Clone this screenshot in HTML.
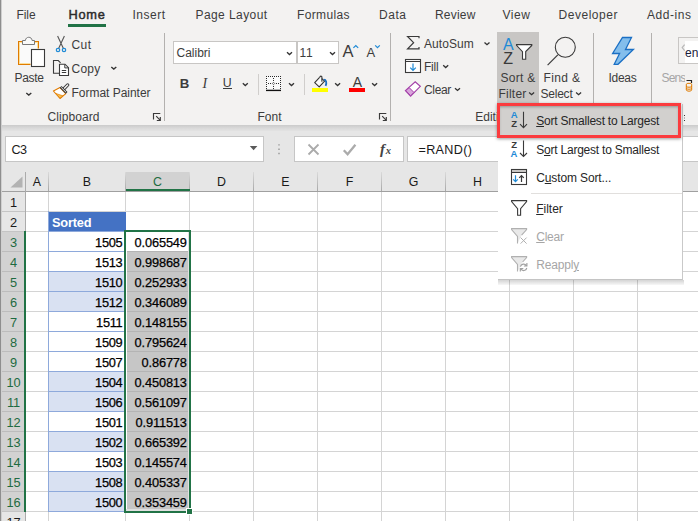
<!DOCTYPE html>
<html><head><meta charset="utf-8"><title>Excel</title>
<style>
html,body{margin:0;padding:0;}
body{width:698px;height:521px;overflow:hidden;position:relative;background:#fff;font-family:"Liberation Sans",sans-serif;font-size:12px;color:#3c3c3c;}
.t{position:absolute;white-space:nowrap;}
.a{position:absolute;}
svg{position:absolute;overflow:visible;}
u{text-decoration:underline;text-underline-offset:1px;}

</style></head>
<body>
<!-- ribbon background -->
<div class="a" style="left:0;top:0;width:698px;height:125px;background:#f3f2f1"></div>
<div class="a" style="left:0;top:125px;width:698px;height:7px;background:linear-gradient(#cbcbcb,#d9d9d9 45%,#e6e6e6)"></div>
<div class="a" style="left:0;top:131px;width:698px;height:41px;background:#e6e6e6"></div>
<!-- active tab underline -->
<div class="a" style="left:68px;top:24px;width:38px;height:2.5px;background:#217346"></div>
<!-- group separators -->
<div class="a" style="left:164px;top:33px;width:1px;height:88px;background:#b3b1af"></div>
<div class="a" style="left:390px;top:33px;width:1px;height:88px;background:#b3b1af"></div>
<div class="a" style="left:593px;top:33px;width:1px;height:71px;background:#b3b1af"></div>
<div class="a" style="left:651px;top:33px;width:1px;height:71px;background:#b3b1af"></div>
<div class="a" style="left:258px;top:74px;width:1px;height:21px;background:#d0cecc"></div>
<div class="a" style="left:304px;top:74px;width:1px;height:21px;background:#d0cecc"></div>
<!-- pressed Sort & Filter -->
<div class="a" style="left:497px;top:32px;width:42px;height:73px;background:#c8c6c4"></div>
<!-- font boxes -->
<div class="a" style="left:173px;top:41px;width:122px;height:21px;background:#fff;border:1px solid #c8c6c4"></div>
<div class="a" style="left:297px;top:41px;width:40px;height:21px;background:#fff;border:1px solid #c8c6c4"></div>
<!-- underline of U -->
<div class="a" style="left:223px;top:88px;width:9px;height:1.4px;background:#3c3c3c"></div>
<!-- colour bars -->
<div class="a" style="left:312px;top:88px;width:16px;height:4px;background:#ffff00"></div>
<div class="a" style="left:349px;top:88px;width:16px;height:4px;background:#ff0000"></div>
<svg width="698" height="521" style="left:0;top:0" fill="none" stroke-linecap="butt">
<!-- Paste -->
<rect x="18.5" y="41.5" width="20" height="23" fill="#fafafa" stroke="#e07b00"/>
<rect x="19.5" y="42.5" width="18" height="21" stroke="#fbdf9a"/>
<path d="M22.5 44.5V40.5H25.4C25.6 36.2 31.9 36.2 32.1 40.5H34.5V44.5Z" fill="#fafafa" stroke="#7a7a7a"/>
<rect x="30.5" y="48.5" width="15" height="19" fill="#f3f2f1"/>
<rect x="31.5" y="49.5" width="13" height="17" fill="#fff" stroke="#3a3a3a" stroke-width="1.1"/>
<!-- Cut -->
<path d="M57.6 36L63.3 48.2M64.4 36L58.7 48.2" stroke="#555" stroke-width="1.1"/>
<circle cx="58" cy="50" r="1.7" stroke="#1e8ad6" stroke-width="1.2"/>
<circle cx="64" cy="50" r="1.7" stroke="#1e8ad6" stroke-width="1.2"/>
<!-- Copy -->
<path d="M59 73.2H53.5V60.5H58.3L60.6 62.8" stroke="#3a3a3a" stroke-width="1.1"/>
<path d="M59.5 64.2H65L68.5 67.7V75.5H59.5Z" fill="#fff" stroke="#3a3a3a" stroke-width="1.1"/>
<path d="M64.8 64.4V67.9H68.3" stroke="#3a3a3a" stroke-width="1"/>
<path d="M61.8 70.5H66.2M61.8 72.5H66.2" stroke="#3a3a3a" stroke-width="1"/>
<!-- Format painter -->
<path d="M60 87.6L53.4 91L60 98.5L65.8 93.6Z" fill="#fff" stroke="#e07b00" stroke-width="1.1" stroke-linejoin="round"/>
<path d="M55.6 93.4L62.8 95.8L60 98.1Z" fill="#f8c050" stroke="#e07b00" stroke-width=".7"/>
<path d="M64.2 88.5L67.7 84.9" stroke="#3a3a3a" stroke-width="3.3" stroke-linecap="round"/>
<path d="M64.2 88.5L67.6 85" stroke="#f3f2f1" stroke-width="1.5" stroke-linecap="round"/>
<path d="M60.6 86.8L66.6 92.8" stroke="#3a3a3a" stroke-width="2.6"/>
<path d="M61.2 87.4L66 92.2" stroke="#f3f2f1" stroke-width=".9"/>
<!-- dialog launchers -->
<g stroke="#3a3a3a" stroke-width="1.15">
<path d="M160.3 113.5H153.5V119.6M156.2 116.2L160.3 120.3M160.3 117V120.5H156.8"/>
<path d="M386.3 113.5H379.5V119.6M382.2 116.2L386.3 120.3M386.3 117V120.5H382.8"/>
</g>
<!-- font box chevrons -->
<g stroke="#333" stroke-width="1.35">
<path d="M287.0 52.3L289.5 54.5L292.0 52.3"/>
<path d="M330.0 52.3L332.5 54.5L335.0 52.3"/>
<path d="M242.8 83.3L245.3 85.5L247.8 83.3"/>
<path d="M289.0 83.3L291.5 85.5L294.0 83.3"/>
<path d="M335.1 83.3L337.6 85.5L340.1 83.3"/>
<path d="M372.1 83.3L374.6 85.5L377.1 83.3"/>
<path d="M484.5 42.5L487.0 44.7L489.5 42.5"/>
<path d="M443.2 65.3L445.7 67.5L448.2 65.3"/>
<path d="M455.0 88.2L457.5 90.4L460.0 88.2"/>
<path d="M529.1 92.5L531.6 94.7L534.1 92.5"/>
<path d="M576.1 92.5L578.6 94.7L581.1 92.5"/>
<path d="M111.3 66.9L113.8 69.1L116.3 66.9"/>
<path d="M26.3 92.9L28.8 95.1L31.3 92.9"/>
</g>
<!-- blue carets -->
<path d="M353.4 47.9L355.8 45.5L358.2 47.9" stroke="#1e8ad6" stroke-width="1.2"/>
<path d="M375.2 45.4L377.5 47.7L379.8 45.4" stroke="#1e8ad6" stroke-width="1.2"/>
<!-- borders icon -->
<rect x="266" y="76" width="15" height="14" fill="#fafafa"/><path d="M266 76h1v1h-1zM266 78h1v1h-1zM266 80h1v1h-1zM266 82h1v1h-1zM266 84h1v1h-1zM266 86h1v1h-1zM266 88h1v1h-1zM268 76h1v1h-1zM268 83h1v1h-1zM270 76h1v1h-1zM270 83h1v1h-1zM272 76h1v1h-1zM273 78h1v1h-1zM273 80h1v1h-1zM273 86h1v1h-1zM273 88h1v1h-1zM274 76h1v1h-1zM276 76h1v1h-1zM276 83h1v1h-1zM278 76h1v1h-1zM278 83h1v1h-1zM280 76h1v1h-1zM280 78h1v1h-1zM280 80h1v1h-1zM280 82h1v1h-1zM280 84h1v1h-1zM280 86h1v1h-1zM280 88h1v1h-1z" fill="#2b2b2b"/><path d="M272.3 83.5L273.5 82.3L274.7 83.5L273.5 84.7Z" stroke="#2b2b2b" stroke-width=".7" fill="none"/><path d="M266 90.4H281" stroke="#111" stroke-width="1.4"/>
<!-- fill bucket -->
<path d="M319.6 77.3L314.7 82.7L319.2 86.8L324.6 81.2L321.9 78.6" fill="#fafafa" stroke="#333" stroke-width="1.1" stroke-linejoin="round"/>
<path d="M319.7 77.5C320 75.7 321.9 75.6 321.9 77.3V81.8" stroke="#333" stroke-width="1.1"/>
<path d="M323.7 79.7C326.2 79.6 327 82.6 325.6 85.8" stroke="#1e6fc0" stroke-width="1.8"/>
<!-- Sigma -->
<path d="M419 38.3V36.5H407.6L413.6 42.7L407.6 48.8H419V47" stroke="#3a3a3a" stroke-width="1.2"/>
<!-- Fill -->
<rect x="405.5" y="59.5" width="15" height="13" fill="#fff" stroke="#3a3a3a" stroke-width="1.1"/>
<path d="M405.5 61.5H420.5" stroke="#3a3a3a" stroke-width="1"/>
<path d="M413 63.5V70.2M410.2 67.6L413 70.4L415.8 67.6" stroke="#1e8ad6" stroke-width="1.2"/>
<!-- Clear -->
<path d="M405.4 90.6L415.2 81.9L420.3 86.4L410.6 96.2Z" fill="#fff" stroke="#a33fa8" stroke-width="1.2"/>
<path d="M405.8 90.6L409.2 87.6L413.9 92.4L410.6 95.7Z" fill="#d9a5dc" stroke="#a33fa8" stroke-width="1"/>
<!-- Sort & filter funnel -->
<path d="M516.5 44.6H531.8V45.4L525.7 51.6V59.3H522.5V51.6L516.5 45.4Z" fill="#fff" stroke="#3a3a3a" stroke-width="1.1"/>
<!-- Find & select -->
<circle cx="565.3" cy="47.3" r="10" stroke="#3a3a3a" stroke-width="1.1" fill="#f3f2f1"/>
<path d="M557.8 54.8L547.6 65.2" stroke="#3a3a3a" stroke-width="1.2"/>
<!-- Ideas -->
<path d="M622.5 37.5H631.5L625.5 49.5H633.4L618 64.3H614.2L619.6 53.5H612.6Z" fill="#83beec" stroke="#1a6fc4" stroke-width="1.3"/>
</svg>

<!-- formula bar -->
<div class="a" style="left:5px;top:136px;width:257px;height:24px;background:#fff;border:1px solid #c6c6c6"></div>
<div class="a" style="left:294px;top:136px;width:108px;height:24px;background:#fff;border:1px solid #c6c6c6"></div>
<div class="a" style="left:407px;top:136px;width:300px;height:24px;background:#fff;border:1px solid #c6c6c6"></div>
<svg width="698" height="521" style="left:0;top:0" fill="none">
<!-- formula bar icons -->
<path d="M249.8 146H257.4L253.6 150.2Z" fill="#5a5a5a"/>
<path d="M279 144.2V145.6M279 148.5V149.9M279 152.8V154.2" stroke="#a0a0a0" stroke-width="1.6"/>
<path d="M308.5 144.5L318.5 154.5M318.5 144.5L308.5 154.5" stroke="#ababab" stroke-width="1.8"/>
<path d="M343.8 150.2L347.6 154.2L355.4 144.8" stroke="#ababab" stroke-width="2.3"/>
</svg>
<div class="a" style="left:0px;top:172px;width:698px;height:19px;background:#e6e6e6;"></div>
<div class="a" style="left:0px;top:191px;width:25px;height:330px;background:#e6e6e6;"></div>
<div class="a" style="left:126px;top:172px;width:63px;height:19px;background:#d2d2d2;"></div>
<div class="a" style="left:2px;top:232px;width:23px;height:279px;background:#d2d2d2;"></div>
<div class="a" style="left:48px;top:192px;width:1px;height:329px;background:#d4d4d4;"></div>
<div class="a" style="left:125px;top:192px;width:1px;height:329px;background:#d4d4d4;"></div>
<div class="a" style="left:189px;top:192px;width:1px;height:329px;background:#d4d4d4;"></div>
<div class="a" style="left:253px;top:192px;width:1px;height:329px;background:#d4d4d4;"></div>
<div class="a" style="left:317px;top:192px;width:1px;height:329px;background:#d4d4d4;"></div>
<div class="a" style="left:381px;top:192px;width:1px;height:329px;background:#d4d4d4;"></div>
<div class="a" style="left:445px;top:192px;width:1px;height:329px;background:#d4d4d4;"></div>
<div class="a" style="left:509px;top:192px;width:1px;height:329px;background:#d4d4d4;"></div>
<div class="a" style="left:573px;top:192px;width:1px;height:329px;background:#d4d4d4;"></div>
<div class="a" style="left:637px;top:192px;width:1px;height:329px;background:#d4d4d4;"></div>
<div class="a" style="left:701px;top:192px;width:1px;height:329px;background:#d4d4d4;"></div>
<div class="a" style="left:26px;top:211px;width:672px;height:1px;background:#d4d4d4;"></div>
<div class="a" style="left:26px;top:231px;width:672px;height:1px;background:#d4d4d4;"></div>
<div class="a" style="left:26px;top:251px;width:672px;height:1px;background:#d4d4d4;"></div>
<div class="a" style="left:26px;top:271px;width:672px;height:1px;background:#d4d4d4;"></div>
<div class="a" style="left:26px;top:291px;width:672px;height:1px;background:#d4d4d4;"></div>
<div class="a" style="left:26px;top:311px;width:672px;height:1px;background:#d4d4d4;"></div>
<div class="a" style="left:26px;top:331px;width:672px;height:1px;background:#d4d4d4;"></div>
<div class="a" style="left:26px;top:351px;width:672px;height:1px;background:#d4d4d4;"></div>
<div class="a" style="left:26px;top:371px;width:672px;height:1px;background:#d4d4d4;"></div>
<div class="a" style="left:26px;top:391px;width:672px;height:1px;background:#d4d4d4;"></div>
<div class="a" style="left:26px;top:411px;width:672px;height:1px;background:#d4d4d4;"></div>
<div class="a" style="left:26px;top:431px;width:672px;height:1px;background:#d4d4d4;"></div>
<div class="a" style="left:26px;top:451px;width:672px;height:1px;background:#d4d4d4;"></div>
<div class="a" style="left:26px;top:471px;width:672px;height:1px;background:#d4d4d4;"></div>
<div class="a" style="left:26px;top:491px;width:672px;height:1px;background:#d4d4d4;"></div>
<div class="a" style="left:26px;top:511px;width:672px;height:1px;background:#d4d4d4;"></div>
<div class="a" style="left:26px;top:531px;width:672px;height:1px;background:#d4d4d4;"></div>
<div class="a" style="left:0px;top:191px;width:698px;height:1px;background:#a0a0a0;"></div>
<div class="a" style="left:25px;top:172px;width:1px;height:349px;background:#ababab;"></div>
<div class="a" style="left:48px;top:172px;width:1px;height:19px;background:linear-gradient(#dadada,#a8a8a8);"></div>
<div class="a" style="left:125px;top:172px;width:1px;height:19px;background:linear-gradient(#dadada,#a8a8a8);"></div>
<div class="a" style="left:189px;top:172px;width:1px;height:19px;background:linear-gradient(#dadada,#a8a8a8);"></div>
<div class="a" style="left:253px;top:172px;width:1px;height:19px;background:linear-gradient(#dadada,#a8a8a8);"></div>
<div class="a" style="left:317px;top:172px;width:1px;height:19px;background:linear-gradient(#dadada,#a8a8a8);"></div>
<div class="a" style="left:381px;top:172px;width:1px;height:19px;background:linear-gradient(#dadada,#a8a8a8);"></div>
<div class="a" style="left:445px;top:172px;width:1px;height:19px;background:linear-gradient(#dadada,#a8a8a8);"></div>
<div class="a" style="left:509px;top:172px;width:1px;height:19px;background:linear-gradient(#dadada,#a8a8a8);"></div>
<div class="a" style="left:573px;top:172px;width:1px;height:19px;background:linear-gradient(#dadada,#a8a8a8);"></div>
<div class="a" style="left:637px;top:172px;width:1px;height:19px;background:linear-gradient(#dadada,#a8a8a8);"></div>
<div class="a" style="left:701px;top:172px;width:1px;height:19px;background:linear-gradient(#dadada,#a8a8a8);"></div>
<div class="a" style="left:2px;top:211px;width:23px;height:1px;background:#c4c4c4;"></div>
<div class="a" style="left:2px;top:231px;width:23px;height:1px;background:#c4c4c4;"></div>
<div class="a" style="left:2px;top:251px;width:23px;height:1px;background:#c4c4c4;"></div>
<div class="a" style="left:2px;top:271px;width:23px;height:1px;background:#c4c4c4;"></div>
<div class="a" style="left:2px;top:291px;width:23px;height:1px;background:#c4c4c4;"></div>
<div class="a" style="left:2px;top:311px;width:23px;height:1px;background:#c4c4c4;"></div>
<div class="a" style="left:2px;top:331px;width:23px;height:1px;background:#c4c4c4;"></div>
<div class="a" style="left:2px;top:351px;width:23px;height:1px;background:#c4c4c4;"></div>
<div class="a" style="left:2px;top:371px;width:23px;height:1px;background:#c4c4c4;"></div>
<div class="a" style="left:2px;top:391px;width:23px;height:1px;background:#c4c4c4;"></div>
<div class="a" style="left:2px;top:411px;width:23px;height:1px;background:#c4c4c4;"></div>
<div class="a" style="left:2px;top:431px;width:23px;height:1px;background:#c4c4c4;"></div>
<div class="a" style="left:2px;top:451px;width:23px;height:1px;background:#c4c4c4;"></div>
<div class="a" style="left:2px;top:471px;width:23px;height:1px;background:#c4c4c4;"></div>
<div class="a" style="left:2px;top:491px;width:23px;height:1px;background:#c4c4c4;"></div>
<div class="a" style="left:2px;top:511px;width:23px;height:1px;background:#c4c4c4;"></div>
<div class="a" style="left:2px;top:531px;width:23px;height:1px;background:#c4c4c4;"></div>
<div class="a" style="left:2px;top:251px;width:23px;height:1px;background:#bcbcbc;"></div>
<div class="a" style="left:2px;top:271px;width:23px;height:1px;background:#bcbcbc;"></div>
<div class="a" style="left:2px;top:291px;width:23px;height:1px;background:#bcbcbc;"></div>
<div class="a" style="left:2px;top:311px;width:23px;height:1px;background:#bcbcbc;"></div>
<div class="a" style="left:2px;top:331px;width:23px;height:1px;background:#bcbcbc;"></div>
<div class="a" style="left:2px;top:351px;width:23px;height:1px;background:#bcbcbc;"></div>
<div class="a" style="left:2px;top:371px;width:23px;height:1px;background:#bcbcbc;"></div>
<div class="a" style="left:2px;top:391px;width:23px;height:1px;background:#bcbcbc;"></div>
<div class="a" style="left:2px;top:411px;width:23px;height:1px;background:#bcbcbc;"></div>
<div class="a" style="left:2px;top:431px;width:23px;height:1px;background:#bcbcbc;"></div>
<div class="a" style="left:2px;top:451px;width:23px;height:1px;background:#bcbcbc;"></div>
<div class="a" style="left:2px;top:471px;width:23px;height:1px;background:#bcbcbc;"></div>
<div class="a" style="left:2px;top:491px;width:23px;height:1px;background:#bcbcbc;"></div>
<svg style="left:10px;top:176px" width="13" height="12"><path d="M12.5 0.5V11.5H0.5Z" fill="#b2b2b2"/></svg>
<span class="t" style="top:176.00px;font-size:12.4px;line-height:12px;color:#1a1a1a;left:17.0px;width:40px;text-align:center;">A</span>
<span class="t" style="top:176.00px;font-size:12.4px;line-height:12px;color:#1a1a1a;left:67.0px;width:40px;text-align:center;">B</span>
<span class="t" style="top:176.00px;font-size:12.4px;line-height:12px;color:#1e6b41;left:137.5px;width:40px;text-align:center;">C</span>
<span class="t" style="top:176.00px;font-size:12.4px;line-height:12px;color:#1a1a1a;left:201.5px;width:40px;text-align:center;">D</span>
<span class="t" style="top:176.00px;font-size:12.4px;line-height:12px;color:#1a1a1a;left:265.5px;width:40px;text-align:center;">E</span>
<span class="t" style="top:176.00px;font-size:12.4px;line-height:12px;color:#1a1a1a;left:329.5px;width:40px;text-align:center;">F</span>
<span class="t" style="top:176.00px;font-size:12.4px;line-height:12px;color:#1a1a1a;left:393.5px;width:40px;text-align:center;">G</span>
<span class="t" style="top:176.00px;font-size:12.4px;line-height:12px;color:#1a1a1a;left:457.5px;width:40px;text-align:center;">H</span>
<span class="t" style="top:176.00px;font-size:12.4px;line-height:12px;color:#1a1a1a;left:521.5px;width:40px;text-align:center;">I</span>
<span class="t" style="top:176.00px;font-size:12.4px;line-height:12px;color:#1a1a1a;left:585.5px;width:40px;text-align:center;">J</span>
<span class="t" style="top:196.00px;font-size:12.8px;line-height:13px;color:#1a1a1a;left:1.5999999999999996px;width:24px;text-align:center;">1</span>
<span class="t" style="top:216.00px;font-size:12.8px;line-height:13px;color:#1a1a1a;left:1.5999999999999996px;width:24px;text-align:center;">2</span>
<span class="t" style="top:236.00px;font-size:12.8px;line-height:13px;color:#1e6b41;left:1.5999999999999996px;width:24px;text-align:center;">3</span>
<span class="t" style="top:256.00px;font-size:12.8px;line-height:13px;color:#1e6b41;left:1.5999999999999996px;width:24px;text-align:center;">4</span>
<span class="t" style="top:276.00px;font-size:12.8px;line-height:13px;color:#1e6b41;left:1.5999999999999996px;width:24px;text-align:center;">5</span>
<span class="t" style="top:296.00px;font-size:12.8px;line-height:13px;color:#1e6b41;left:1.5999999999999996px;width:24px;text-align:center;">6</span>
<span class="t" style="top:316.00px;font-size:12.8px;line-height:13px;color:#1e6b41;left:1.5999999999999996px;width:24px;text-align:center;">7</span>
<span class="t" style="top:336.00px;font-size:12.8px;line-height:13px;color:#1e6b41;left:1.5999999999999996px;width:24px;text-align:center;">8</span>
<span class="t" style="top:356.00px;font-size:12.8px;line-height:13px;color:#1e6b41;left:1.5999999999999996px;width:24px;text-align:center;">9</span>
<span class="t" style="top:376.00px;font-size:12.8px;line-height:13px;color:#1e6b41;left:1.5999999999999996px;width:24px;text-align:center;">10</span>
<span class="t" style="top:396.00px;font-size:12.8px;line-height:13px;color:#1e6b41;left:1.5999999999999996px;width:24px;text-align:center;">11</span>
<span class="t" style="top:416.00px;font-size:12.8px;line-height:13px;color:#1e6b41;left:1.5999999999999996px;width:24px;text-align:center;">12</span>
<span class="t" style="top:436.00px;font-size:12.8px;line-height:13px;color:#1e6b41;left:1.5999999999999996px;width:24px;text-align:center;">13</span>
<span class="t" style="top:456.00px;font-size:12.8px;line-height:13px;color:#1e6b41;left:1.5999999999999996px;width:24px;text-align:center;">14</span>
<span class="t" style="top:476.00px;font-size:12.8px;line-height:13px;color:#1e6b41;left:1.5999999999999996px;width:24px;text-align:center;">15</span>
<span class="t" style="top:496.00px;font-size:12.8px;line-height:13px;color:#1e6b41;left:1.5999999999999996px;width:24px;text-align:center;">16</span>
<span class="t" style="top:516.00px;font-size:12.8px;line-height:13px;color:#1a1a1a;left:1.5999999999999996px;width:24px;text-align:center;">17</span>
<div class="a" style="left:126px;top:189px;width:64px;height:2px;background:#217346;"></div>
<div class="a" style="left:24px;top:231px;width:2px;height:281px;background:#217346;"></div>
<div class="a" style="left:49px;top:212px;width:77px;height:19px;background:#4472c4;"></div>
<span class="t" style="top:216.00px;font-size:12.8px;line-height:13px;color:#fff;font-weight:700;letter-spacing:-0.2px;left:52px;">Sorted</span>
<div class="a" style="left:49px;top:272px;width:76px;height:19px;background:#d9e1f2;"></div>
<div class="a" style="left:49px;top:292px;width:76px;height:19px;background:#d9e1f2;"></div>
<div class="a" style="left:49px;top:372px;width:76px;height:19px;background:#d9e1f2;"></div>
<div class="a" style="left:49px;top:392px;width:76px;height:19px;background:#d9e1f2;"></div>
<div class="a" style="left:49px;top:432px;width:76px;height:19px;background:#d9e1f2;"></div>
<div class="a" style="left:49px;top:472px;width:76px;height:19px;background:#d9e1f2;"></div>
<div class="a" style="left:49px;top:492px;width:76px;height:19px;background:#d9e1f2;"></div>
<div class="a" style="left:48px;top:211px;width:1px;height:301px;background:#8ea9db;"></div>
<div class="a" style="left:48px;top:231px;width:77px;height:1px;background:#8ea9db;"></div>
<div class="a" style="left:48px;top:251px;width:77px;height:1px;background:#8ea9db;"></div>
<div class="a" style="left:48px;top:271px;width:77px;height:1px;background:#8ea9db;"></div>
<div class="a" style="left:48px;top:291px;width:77px;height:1px;background:#8ea9db;"></div>
<div class="a" style="left:48px;top:311px;width:77px;height:1px;background:#8ea9db;"></div>
<div class="a" style="left:48px;top:331px;width:77px;height:1px;background:#8ea9db;"></div>
<div class="a" style="left:48px;top:351px;width:77px;height:1px;background:#8ea9db;"></div>
<div class="a" style="left:48px;top:371px;width:77px;height:1px;background:#8ea9db;"></div>
<div class="a" style="left:48px;top:391px;width:77px;height:1px;background:#8ea9db;"></div>
<div class="a" style="left:48px;top:411px;width:77px;height:1px;background:#8ea9db;"></div>
<div class="a" style="left:48px;top:431px;width:77px;height:1px;background:#8ea9db;"></div>
<div class="a" style="left:48px;top:451px;width:77px;height:1px;background:#8ea9db;"></div>
<div class="a" style="left:48px;top:471px;width:77px;height:1px;background:#8ea9db;"></div>
<div class="a" style="left:48px;top:491px;width:77px;height:1px;background:#8ea9db;"></div>
<div class="a" style="left:48px;top:511px;width:77px;height:1px;background:#8ea9db;"></div>
<div class="a" style="left:127px;top:252px;width:61px;height:257px;background:#c6c6c6;"></div>
<div class="a" style="left:127px;top:251px;width:61px;height:1px;background:#b4b4b4;"></div>
<div class="a" style="left:127px;top:271px;width:61px;height:1px;background:#b4b4b4;"></div>
<div class="a" style="left:127px;top:291px;width:61px;height:1px;background:#b4b4b4;"></div>
<div class="a" style="left:127px;top:311px;width:61px;height:1px;background:#b4b4b4;"></div>
<div class="a" style="left:127px;top:331px;width:61px;height:1px;background:#b4b4b4;"></div>
<div class="a" style="left:127px;top:351px;width:61px;height:1px;background:#b4b4b4;"></div>
<div class="a" style="left:127px;top:371px;width:61px;height:1px;background:#b4b4b4;"></div>
<div class="a" style="left:127px;top:391px;width:61px;height:1px;background:#b4b4b4;"></div>
<div class="a" style="left:127px;top:411px;width:61px;height:1px;background:#b4b4b4;"></div>
<div class="a" style="left:127px;top:431px;width:61px;height:1px;background:#b4b4b4;"></div>
<div class="a" style="left:127px;top:451px;width:61px;height:1px;background:#b4b4b4;"></div>
<div class="a" style="left:127px;top:471px;width:61px;height:1px;background:#b4b4b4;"></div>
<div class="a" style="left:127px;top:491px;width:61px;height:1px;background:#b4b4b4;"></div>
<div class="a" style="left:126px;top:232px;width:63px;height:1px;background:#fff;"></div>
<div class="a" style="left:126px;top:232px;width:1px;height:278px;background:#fff;"></div>
<div class="a" style="left:188px;top:232px;width:1px;height:277px;background:#e0e0e0;"></div>
<div class="a" style="left:126px;top:509px;width:62px;height:2px;background:#e0e0e0;"></div>
<div class="a" style="left:127px;top:233px;width:61px;height:18px;background:#fff;"></div>
<span class="t" style="top:236.00px;font-size:12.8px;line-height:13px;color:#000;letter-spacing:-0.3px;-webkit-text-stroke:0.25px #000;left:62.400000000000006px;width:60px;text-align:right;">1505</span>
<span class="t" style="top:236.00px;font-size:12.8px;line-height:13px;color:#000;letter-spacing:-0.15px;-webkit-text-stroke:0.25px #000;left:126.80000000000001px;width:60px;text-align:right;">0.065549</span>
<span class="t" style="top:256.00px;font-size:12.8px;line-height:13px;color:#000;letter-spacing:-0.3px;-webkit-text-stroke:0.25px #000;left:62.400000000000006px;width:60px;text-align:right;">1513</span>
<span class="t" style="top:256.00px;font-size:12.8px;line-height:13px;color:#000;letter-spacing:-0.15px;-webkit-text-stroke:0.25px #000;left:126.80000000000001px;width:60px;text-align:right;">0.998687</span>
<span class="t" style="top:276.00px;font-size:12.8px;line-height:13px;color:#000;letter-spacing:-0.3px;-webkit-text-stroke:0.25px #000;left:62.400000000000006px;width:60px;text-align:right;">1510</span>
<span class="t" style="top:276.00px;font-size:12.8px;line-height:13px;color:#000;letter-spacing:-0.15px;-webkit-text-stroke:0.25px #000;left:126.80000000000001px;width:60px;text-align:right;">0.252933</span>
<span class="t" style="top:296.00px;font-size:12.8px;line-height:13px;color:#000;letter-spacing:-0.3px;-webkit-text-stroke:0.25px #000;left:62.400000000000006px;width:60px;text-align:right;">1512</span>
<span class="t" style="top:296.00px;font-size:12.8px;line-height:13px;color:#000;letter-spacing:-0.15px;-webkit-text-stroke:0.25px #000;left:126.80000000000001px;width:60px;text-align:right;">0.346089</span>
<span class="t" style="top:316.00px;font-size:12.8px;line-height:13px;color:#000;letter-spacing:-0.3px;-webkit-text-stroke:0.25px #000;left:62.400000000000006px;width:60px;text-align:right;">1511</span>
<span class="t" style="top:316.00px;font-size:12.8px;line-height:13px;color:#000;letter-spacing:-0.15px;-webkit-text-stroke:0.25px #000;left:126.80000000000001px;width:60px;text-align:right;">0.148155</span>
<span class="t" style="top:336.00px;font-size:12.8px;line-height:13px;color:#000;letter-spacing:-0.3px;-webkit-text-stroke:0.25px #000;left:62.400000000000006px;width:60px;text-align:right;">1509</span>
<span class="t" style="top:336.00px;font-size:12.8px;line-height:13px;color:#000;letter-spacing:-0.15px;-webkit-text-stroke:0.25px #000;left:126.80000000000001px;width:60px;text-align:right;">0.795624</span>
<span class="t" style="top:356.00px;font-size:12.8px;line-height:13px;color:#000;letter-spacing:-0.3px;-webkit-text-stroke:0.25px #000;left:62.400000000000006px;width:60px;text-align:right;">1507</span>
<span class="t" style="top:356.00px;font-size:12.8px;line-height:13px;color:#000;letter-spacing:-0.15px;-webkit-text-stroke:0.25px #000;left:126.80000000000001px;width:60px;text-align:right;">0.86778</span>
<span class="t" style="top:376.00px;font-size:12.8px;line-height:13px;color:#000;letter-spacing:-0.3px;-webkit-text-stroke:0.25px #000;left:62.400000000000006px;width:60px;text-align:right;">1504</span>
<span class="t" style="top:376.00px;font-size:12.8px;line-height:13px;color:#000;letter-spacing:-0.15px;-webkit-text-stroke:0.25px #000;left:126.80000000000001px;width:60px;text-align:right;">0.450813</span>
<span class="t" style="top:396.00px;font-size:12.8px;line-height:13px;color:#000;letter-spacing:-0.3px;-webkit-text-stroke:0.25px #000;left:62.400000000000006px;width:60px;text-align:right;">1506</span>
<span class="t" style="top:396.00px;font-size:12.8px;line-height:13px;color:#000;letter-spacing:-0.15px;-webkit-text-stroke:0.25px #000;left:126.80000000000001px;width:60px;text-align:right;">0.561097</span>
<span class="t" style="top:416.00px;font-size:12.8px;line-height:13px;color:#000;letter-spacing:-0.3px;-webkit-text-stroke:0.25px #000;left:62.400000000000006px;width:60px;text-align:right;">1501</span>
<span class="t" style="top:416.00px;font-size:12.8px;line-height:13px;color:#000;letter-spacing:-0.15px;-webkit-text-stroke:0.25px #000;left:126.80000000000001px;width:60px;text-align:right;">0.911513</span>
<span class="t" style="top:436.00px;font-size:12.8px;line-height:13px;color:#000;letter-spacing:-0.3px;-webkit-text-stroke:0.25px #000;left:62.400000000000006px;width:60px;text-align:right;">1502</span>
<span class="t" style="top:436.00px;font-size:12.8px;line-height:13px;color:#000;letter-spacing:-0.15px;-webkit-text-stroke:0.25px #000;left:126.80000000000001px;width:60px;text-align:right;">0.665392</span>
<span class="t" style="top:456.00px;font-size:12.8px;line-height:13px;color:#000;letter-spacing:-0.3px;-webkit-text-stroke:0.25px #000;left:62.400000000000006px;width:60px;text-align:right;">1503</span>
<span class="t" style="top:456.00px;font-size:12.8px;line-height:13px;color:#000;letter-spacing:-0.15px;-webkit-text-stroke:0.25px #000;left:126.80000000000001px;width:60px;text-align:right;">0.145574</span>
<span class="t" style="top:476.00px;font-size:12.8px;line-height:13px;color:#000;letter-spacing:-0.3px;-webkit-text-stroke:0.25px #000;left:62.400000000000006px;width:60px;text-align:right;">1508</span>
<span class="t" style="top:476.00px;font-size:12.8px;line-height:13px;color:#000;letter-spacing:-0.15px;-webkit-text-stroke:0.25px #000;left:126.80000000000001px;width:60px;text-align:right;">0.405337</span>
<span class="t" style="top:496.00px;font-size:12.8px;line-height:13px;color:#000;letter-spacing:-0.3px;-webkit-text-stroke:0.25px #000;left:62.400000000000006px;width:60px;text-align:right;">1500</span>
<span class="t" style="top:496.00px;font-size:12.8px;line-height:13px;color:#000;letter-spacing:-0.15px;-webkit-text-stroke:0.25px #000;left:126.80000000000001px;width:60px;text-align:right;">0.353459</span>
<div class="a" style="left:124px;top:230px;width:67px;height:2px;background:#217346;"></div>
<div class="a" style="left:124px;top:230px;width:2px;height:283px;background:#217346;"></div>
<div class="a" style="left:189px;top:230px;width:2px;height:278px;background:#217346;"></div>
<div class="a" style="left:124px;top:511px;width:62px;height:2px;background:#217346;"></div>
<div class="a" style="left:186px;top:508px;width:7px;height:7px;background:#fff;"></div>
<div class="a" style="left:187px;top:509px;width:5px;height:5px;background:#217346;"></div>
<span class="t" style="left:16.50px;top:9.00px;font-size:12px;line-height:12px;color:#3c3c3c;letter-spacing:-0.086px;">File</span>
<span class="t" style="left:68.50px;top:8.00px;font-size:12.8px;line-height:13px;color:#2b2b2b;letter-spacing:0.715px;-webkit-text-stroke:0.45px #2b2b2b;">Home</span>
<span class="t" style="left:132.50px;top:9.00px;font-size:12px;line-height:12px;color:#3c3c3c;letter-spacing:0.497px;">Insert</span>
<span class="t" style="left:195.50px;top:9.00px;font-size:12px;line-height:12px;color:#3c3c3c;letter-spacing:0.419px;">Page Layout</span>
<span class="t" style="left:297.00px;top:9.00px;font-size:12px;line-height:12px;color:#3c3c3c;letter-spacing:0.373px;">Formulas</span>
<span class="t" style="left:379.00px;top:9.00px;font-size:12px;line-height:12px;color:#3c3c3c;letter-spacing:0.535px;">Data</span>
<span class="t" style="left:435.00px;top:9.00px;font-size:12px;line-height:12px;color:#3c3c3c;letter-spacing:0.190px;">Review</span>
<span class="t" style="left:502.50px;top:9.00px;font-size:12px;line-height:12px;color:#3c3c3c;letter-spacing:0.551px;">View</span>
<span class="t" style="left:558.50px;top:9.00px;font-size:12px;line-height:12px;color:#3c3c3c;letter-spacing:0.533px;">Developer</span>
<span class="t" style="left:647.00px;top:9.00px;font-size:12px;line-height:12px;color:#3c3c3c;letter-spacing:0.545px;">Add-ins</span>
<span class="t" style="left:14.50px;top:72.00px;font-size:12px;line-height:12px;color:#3c3c3c;letter-spacing:-0.338px;">Paste</span>
<span class="t" style="left:71.50px;top:39.00px;font-size:12px;line-height:12px;color:#3c3c3c;letter-spacing:0.438px;">Cut</span>
<span class="t" style="left:71.50px;top:63.00px;font-size:12px;line-height:12px;color:#3c3c3c;letter-spacing:0.246px;">Copy</span>
<span class="t" style="left:71.50px;top:87.00px;font-size:12px;line-height:12px;color:#3c3c3c;letter-spacing:-0.026px;">Format Painter</span>
<span class="t" style="left:47.50px;top:111.00px;font-size:12px;line-height:12px;color:#3c3c3c;letter-spacing:0.069px;">Clipboard</span>
<span class="t" style="left:176.50px;top:47.00px;font-size:12px;line-height:12px;color:#3c3c3c;">Calibri</span>
<span class="t" style="left:299.50px;top:47.00px;font-size:12px;line-height:12px;color:#3c3c3c;letter-spacing:0.766px;">11</span>
<span class="t" style="left:179.80px;top:77.00px;font-size:13.2px;line-height:13px;color:#3c3c3c;font-weight:700;">B</span>
<span class="t" style="left:202.50px;top:76.50px;font-size:14px;line-height:14px;color:#3c3c3c;font-style:italic;font-family:'Liberation Serif', serif;">I</span>
<span class="t" style="left:222.80px;top:77.00px;font-size:12.3px;line-height:12px;color:#3c3c3c;">U</span>
<span class="t" style="left:257.50px;top:111.00px;font-size:12px;line-height:12px;color:#3c3c3c;">Font</span>
<span class="t" style="left:342.50px;top:43.00px;font-size:16.5px;line-height:16px;color:#3c3c3c;">A</span>
<span class="t" style="left:366.50px;top:46.00px;font-size:13px;line-height:13px;color:#3c3c3c;">A</span>
<span class="t" style="left:352.80px;top:75.00px;font-size:14px;line-height:14px;color:#3c3c3c;">A</span>
<span class="t" style="left:424.00px;top:38.00px;font-size:12px;line-height:12px;color:#3c3c3c;letter-spacing:0.049px;">AutoSum</span>
<span class="t" style="left:424.00px;top:61.00px;font-size:12px;line-height:12px;color:#3c3c3c;letter-spacing:-0.207px;">Fill</span>
<span class="t" style="left:424.00px;top:84.00px;font-size:12px;line-height:12px;color:#3c3c3c;letter-spacing:-0.338px;">Clear</span>
<span class="t" style="left:475.20px;top:111.00px;font-size:12px;line-height:12px;color:#3c3c3c;letter-spacing:0.014px;">Editing</span>
<span class="t" style="left:500.50px;top:72.00px;font-size:12px;line-height:12px;color:#3c3c3c;letter-spacing:0.273px;">Sort &amp;</span>
<span class="t" style="left:498.50px;top:88.00px;font-size:12px;line-height:12px;color:#3c3c3c;letter-spacing:0.221px;">Filter</span>
<span class="t" style="left:543.50px;top:72.00px;font-size:12px;line-height:12px;color:#3c3c3c;letter-spacing:0.385px;">Find &amp;</span>
<span class="t" style="left:540.50px;top:88.00px;font-size:12px;line-height:12px;color:#3c3c3c;letter-spacing:-0.227px;">Select</span>
<span class="t" style="left:608.50px;top:72.00px;font-size:12px;line-height:12px;color:#3c3c3c;letter-spacing:-0.272px;">Ideas</span>
<span class="t" style="left:661.50px;top:72.00px;font-size:12px;line-height:12px;color:#a6a6a6;letter-spacing:-0.840px;">Sens</span>
<span class="t" style="left:503.10px;top:36.50px;font-size:16px;line-height:16px;color:#1e8ad6;">A</span>
<span class="t" style="left:503.30px;top:50.50px;font-size:16px;line-height:16px;color:#3a3a3a;">Z</span>
<span class="t" style="left:11.50px;top:143.50px;font-size:12.6px;line-height:13px;color:#1a1a1a;letter-spacing:-0.555px;">C3</span>
<span class="t" style="left:418.50px;top:143.50px;font-size:12.6px;line-height:13px;color:#1a1a1a;letter-spacing:0.330px;">=RAND()</span>
<span class="t" style="left:380.00px;top:141.50px;font-size:15px;line-height:15px;color:#444;font-weight:700;font-style:italic;font-family:'Liberation Serif', serif;letter-spacing:0.625px;">f<span style="font-size:10.5px">x</span></span>
<!-- right overlay (partially visible gallery/tooltip) -->
<div class="a" style="left:685px;top:70px;width:13px;height:30px;background:#f3f2f1"></div>
<div class="a" style="left:678px;top:37px;width:30px;height:27px;background:#f3f2f1;border:1px solid #c8c6c4;box-sizing:border-box"></div>
<div class="a" style="left:685px;top:41px;width:20px;height:22px;background:#fff"></div>
<svg width="698" height="521" style="left:0;top:0" fill="none">
<path d="M684.6 44.6L682.2 47.6L684.6 50.6" stroke="#b8b8b8" stroke-width="1.2"/>
<path d="M686.5 80.5H691.5V83" stroke="#222" stroke-width="1.2"/>
<path d="M686.3 84.2C686.3 83 691.7 83 691.7 84.2V90C691.7 91.6 686.3 91.6 686.3 90ZM686.3 86.2C686.3 87.6 691.7 87.6 691.7 86.2M686.3 88.2C686.3 89.6 691.7 89.6 691.7 88.2" stroke="#e07b00" stroke-width="1"/>
</svg>
<span class="t" style="left:685px;top:46px;font-size:12px;line-height:14px;color:#1b1b3a">en</span>
<div class="a" style="left:684px;top:115px;width:1px;height:1px;background:#333"></div><div class="a" style="left:684px;top:120px;width:1px;height:1px;background:#333"></div><div class="a" style="left:684px;top:117px;width:1px;height:2px;background:#bbb"></div>
<!-- dropdown menu -->
<div class="a" style="left:498px;top:104px;width:185px;height:176px;background:#fff;border-right:1px solid #c9c9c9;border-bottom:1px solid #c4c4c4;box-sizing:border-box"></div>
<div class="a" style="left:498px;top:280px;width:186px;height:5px;background:linear-gradient(rgba(0,0,0,.17),rgba(0,0,0,.03))"></div>
<div class="a" style="left:531px;top:193px;width:151px;height:1px;background:#e1dfdd"></div>
<!-- highlighted item with red annotation box -->
<div class="a" style="left:497px;top:103px;width:178px;height:29px;background:#d2d0ce;border:3px solid #fb3b3e;box-shadow:0 1px 3px 0 rgba(0,0,0,.4),inset 0 2px 3px -1px rgba(0,0,0,.3)"></div>
<svg width="698" height="521" style="left:0;top:0" fill="none">
<!-- arrows -->
<g stroke="#3a3a3a" stroke-width="1.1">
<path d="M523.5 111.8V127.3M520 124.2L523.5 127.7L527 124.2"/>
<path d="M523.5 140.6V156.1M520 153L523.5 156.5L527 153"/>
</g>
<!-- custom sort -->
<rect x="511.5" y="169.5" width="15" height="15" fill="#fff" stroke="#3a3a3a" stroke-width="1.1"/>
<rect x="512" y="170" width="14" height="2.5" fill="#c8c6c4"/>
<path d="M511.5 172.5H526.5" stroke="#3a3a3a" stroke-width="1"/>
<path d="M515.5 175.3V181.5M513.2 179.4L515.5 181.7L517.8 179.4" stroke="#1e8ad6" stroke-width="1.2"/>
<path d="M521.5 182V175.8M519.2 177.9L521.5 175.6L523.8 177.9" stroke="#3a3a3a" stroke-width="1.2"/>
<!-- filter -->
<path d="M511.6 200.6H526.6V201.6L520.6 208.6V215.2H517.6V208.6L511.6 201.6Z" fill="#fff" stroke="#3a3a3a" stroke-width="1.1"/>
<!-- clear (disabled) -->
<path d="M517.5 243.6V236.4L511.6 229.6V228.6H526.6V229.6L521.6 235.2" fill="#e9e9e9" stroke="#b0b0b0" stroke-width="1.1"/>
<path d="M520.6 237.6L526.6 243.6M526.6 237.6L520.6 243.6" stroke="#b0b0b0" stroke-width="1"/>
<!-- reapply (disabled) -->
<path d="M517.5 271.6V264.4L511.6 257.6V256.6H526.6V257.6L522.6 262" fill="#e9e9e9" stroke="#b0b0b0" stroke-width="1.1"/>
<path d="M520.4 266.6A3.3 3.3 0 0 1 526.4 265.6M526.9 263V266H523.9M526.8 268A3.3 3.3 0 0 1 520.8 269M520.3 271.6V268.6H523.3" stroke="#a0a0a0" stroke-width="1.15"/>
</svg>
<span class="t" style="left:510.8px;top:110.4px;font-size:9.5px;line-height:9px;font-weight:700;color:#1e8ad6">A</span>
<span class="t" style="left:511.2px;top:119.4px;font-size:9.5px;line-height:9px;font-weight:700;color:#3a3a3a">Z</span>
<span class="t" style="left:511.2px;top:140px;font-size:9.5px;line-height:9px;font-weight:700;color:#3a3a3a">Z</span>
<span class="t" style="left:510.6px;top:149px;font-size:9.5px;line-height:9px;font-weight:700;color:#1e8ad6">A</span>

<span class="t" style="left:536.20px;top:115.00px;font-size:12px;line-height:12px;color:#262626;letter-spacing:-0.216px;"><u>S</u>ort Smallest to Largest</span>
<span class="t" style="left:536.20px;top:144.00px;font-size:12px;line-height:12px;color:#262626;letter-spacing:-0.216px;">S<u>o</u>rt Largest to Smallest</span>
<span class="t" style="left:536.20px;top:172.00px;font-size:12px;line-height:12px;color:#262626;letter-spacing:-0.123px;">C<u>u</u>stom Sort...</span>
<span class="t" style="left:536.20px;top:203.00px;font-size:12px;line-height:12px;color:#262626;letter-spacing:-0.015px;"><u>F</u>ilter</span>
<span class="t" style="left:536.20px;top:231.00px;font-size:12px;line-height:12px;color:#a6a6a6;letter-spacing:-0.218px;"><u>C</u>lear</span>
<span class="t" style="left:536.20px;top:259.00px;font-size:12px;line-height:12px;color:#a6a6a6;letter-spacing:-0.176px;">Reappl<u>y</u></span>

<!-- left edge line -->
<div class="a" style="left:0;top:0;width:1px;height:521px;background:#8e8e8e"></div>
<div class="a" style="left:1px;top:0;width:1px;height:521px;background:#cfcfcf"></div>

</body></html>
